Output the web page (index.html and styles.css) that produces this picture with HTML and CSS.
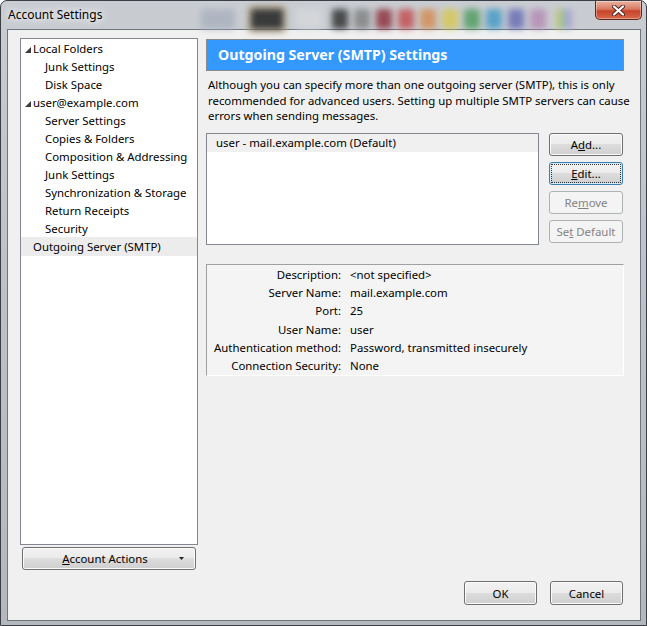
FILE: index.html
```html
<!DOCTYPE html>
<html lang="en">
<head>
  <meta charset="UTF-8">
  <meta name="viewport" content="width=device-width, initial-scale=1.0">
  <title>Account Settings</title>
  <link rel="stylesheet" href="styles.css">
</head>
<body>
  <div class="window">
    <div class="titlebar">
      <span class="title">Account Settings</span>
      <div class="glass">
        <span class="sw sw-slate"></span>
        <span class="sw sw-black"></span>
        <span class="sw sw-light"></span>
        <span class="sw sw-dark"></span>
        <span class="sw sw-grey"></span>
        <span class="sw sw-wine"></span>
        <span class="sw sw-red"></span>
        <span class="sw sw-orange"></span>
        <span class="sw sw-yellow"></span>
        <span class="sw sw-green"></span>
        <span class="sw sw-blue"></span>
        <span class="sw sw-indigo"></span>
        <span class="sw sw-mauve"></span>
        <span class="sw sw-rainbow"></span>
      </div>
      <button class="close" aria-label="Close">
        <svg width="13" height="11" viewBox="0 0 13 11">
          <path d="M2 1.5 L11 9.5 M11 1.5 L2 9.5" stroke="#4a2520" stroke-width="4" stroke-linecap="round"/>
          <path d="M2 1.5 L11 9.5 M11 1.5 L2 9.5" stroke="#fff" stroke-width="2.2" stroke-linecap="round"/>
        </svg>
      </button>
    </div>

    <div class="client">
      <div class="sidebar">
        <ul class="tree">
          <li class="node"><svg class="twisty" width="6" height="6" viewBox="0 0 6 6"><polygon points="6,0 6,6 0,6" fill="#3c3c3c"/></svg>Local Folders</li>
          <li class="leaf">Junk Settings</li>
          <li class="leaf">Disk Space</li>
          <li class="node"><svg class="twisty" width="6" height="6" viewBox="0 0 6 6"><polygon points="6,0 6,6 0,6" fill="#3c3c3c"/></svg>user@example.com</li>
          <li class="leaf">Server Settings</li>
          <li class="leaf">Copies &amp; Folders</li>
          <li class="leaf">Composition &amp; Addressing</li>
          <li class="leaf">Junk Settings</li>
          <li class="leaf">Synchronization &amp; Storage</li>
          <li class="leaf">Return Receipts</li>
          <li class="leaf">Security</li>
          <li class="node plain selected">Outgoing Server (SMTP)</li>
        </ul>
        <button class="btn actions">
          <span class="actions-label"><u>A</u>ccount Actions</span>
          <svg class="caret" width="5" height="3" viewBox="0 0 5 3"><polygon points="0,0 5,0 2.5,3" fill="#222"/></svg>
        </button>
      </div>

      <div class="panel">
        <div class="panel-header">Outgoing Server (SMTP) Settings</div>
        <p class="intro">Although you can specify more than one outgoing server (SMTP), this is only recommended for advanced users. Setting up multiple SMTP servers can cause errors when sending messages.</p>

        <div class="servers">
          <ul class="server-list">
            <li class="current">user - mail.example.com (Default)</li>
          </ul>
          <div class="server-buttons">
            <button class="btn">A<u>d</u>d...</button>
            <button class="btn focused"><span class="focus-ring"><u>E</u>dit...</span></button>
            <button class="btn" disabled>Re<u>m</u>ove</button>
            <button class="btn" disabled>Se<u>t</u> Default</button>
          </div>
        </div>

        <div class="details">
          <span class="label">Description:</span><span class="value">&lt;not specified&gt;</span>
          <span class="label">Server Name:</span><span class="value">mail.example.com</span>
          <span class="label">Port:</span><span class="value">25</span>
          <span class="label">User Name:</span><span class="value">user</span>
          <span class="label">Authentication method:</span><span class="value">Password, transmitted insecurely</span>
          <span class="label">Connection Security:</span><span class="value">None</span>
        </div>

        <div class="dialog-buttons">
          <button class="btn">OK</button>
          <button class="btn">Cancel</button>
        </div>
      </div>
    </div>
  </div>
</body>
</html>
```

FILE: styles.css
```css
html, body { margin: 0; padding: 0; }
body { font-family: "Noto Sans", "Open Sans", sans-serif; font-size: 11.4px; color: #000; background: #fff; }

.window { box-sizing: border-box; width: 647px; height: 626px; border: 1px solid #3b3f45; border-radius: 7px 7px 0 0; padding: 0 5px 4px 6px; display: flex; flex-direction: column; background: linear-gradient(180deg, #c9cdd2 0%, #bfc3c9 40%, #b4b8bd 100%); }

/* title bar */
.titlebar { height: 28px; flex: none; display: flex; align-items: flex-start; }
.title { padding: 6px 0 0 1px; line-height: 16px; font-size: 12px; text-shadow: 0 0 6px #fff, 0 0 10px #fff; width: 193px; flex: none; }
.glass { display: flex; align-items: flex-start; margin-top: 8px; height: 20px; filter: blur(3px); opacity: 0.8; }
.sw { display: block; height: 20px; width: 16px; margin-right: 6px; border-radius: 2px; }
.sw-slate { width: 34px; background: #a9b0bd; margin-right: 16px; }
.sw-black { width: 32px; background: #161616; box-shadow: 0 0 0 4px #b8a98a; margin-right: 13px; }
.sw-light { width: 26px; background: #d6d8db; margin-right: 10px; }
.sw-dark { background: #2a2a2a; }
.sw-grey { background: #7d7d7d; }
.sw-wine { background: #8c2a36; }
.sw-red { background: #c24848; }
.sw-orange { background: #d48a4e; }
.sw-yellow { background: #d6c84e; }
.sw-green { background: #4a9a5a; }
.sw-blue { background: #3f98c6; }
.sw-indigo { background: #6468b4; }
.sw-mauve { background: #b388b4; margin-right: 10px; }
.sw-rainbow { background: linear-gradient(90deg, #d7c060, #9cc474, #8aa8d8, #c090c8); }

.close { margin-left: auto; margin-right: -1px; width: 47px; height: 19px; padding: 0; border: 1px solid #5c2a22; border-top: none; border-radius: 0 0 5px 5px; background: linear-gradient(180deg, #eab3a3 0%, #d87a60 45%, #c7432a 55%, #d8664a 100%); box-shadow: inset 0 0 0 1px rgba(255,255,255,0.35); display: flex; align-items: center; justify-content: center; }

/* client area */
.client { flex: 1; border: 1px solid #6d7580; background: #f0f0f0; padding: 8px 16px 15px 12px; display: flex; align-items: stretch; }

.sidebar { width: 178px; flex: none; align-self: flex-start; }
.tree { box-sizing: border-box; height: 507px; margin: 0; padding: 1px 0 0; list-style: none; background: #fff; border: 1px solid #828790; }
.tree li { height: 18px; line-height: 18px; white-space: nowrap; display: flex; align-items: center; }
.tree .node { padding-left: 4px; }
.tree .node.plain { padding-left: 12px; }
.tree .leaf { padding-left: 24px; }
.tree .selected { background: #ececec; margin-top: -1px; height: 19px; }
.twisty { margin: 1px 2px 0 0; flex: none; }

.btn { font: inherit; color: #000; height: 23px; padding: 0; border: 1px solid #707070; border-radius: 3px; background: linear-gradient(180deg, #f2f2f2 0%, #ebebeb 50%, #dddddd 50%, #cfcfcf 100%); box-shadow: inset 0 0 0 1px #fbfbfb; cursor: pointer; }
.btn:disabled { border-color: #adb2b5; background: #f4f4f4; color: #838383; box-shadow: none; cursor: default; }
.btn.focused { border-color: #3c7fb1; box-shadow: inset 0 0 0 1px #d4ecfa; }
.focus-ring { display: block; margin: 2px; line-height: 17px; outline: 1px dotted #333; outline-offset: 0; }

.actions { width: 174px; margin: 2px 0 0 2px; display: flex; align-items: center; }
.actions-label { flex: 1; padding-left: 8px; }
.caret { margin-right: 11px; }

/* right panel */
.panel { flex: 1; margin-left: 8px; display: flex; flex-direction: column; }
.panel-header { box-sizing: border-box; height: 32px; margin-top: 1px; padding-left: 11px; border: 1px solid #8a8a8a; background: #3399ff; color: #fff; font-size: 14.2px; font-weight: bold; line-height: 30px; }
.intro { margin: 6px -8px 0 2px; line-height: 15.5px; }

.servers { display: flex; margin-top: 9px; }
.server-list { box-sizing: border-box; width: 333px; height: 112px; margin: 0; padding: 0; list-style: none; background: #fff; border: 1px solid #828790; }
.server-list li { height: 18px; line-height: 17px; padding-left: 9px; }
.server-list .current { background: #f0f0f0; }
.server-buttons { width: 74px; margin-left: 10px; display: flex; flex-direction: column; gap: 6px; }
.server-buttons .btn { width: 74px; }

.details { box-sizing: border-box; height: 112px; margin-top: 19px; padding-top: 1px; border-top: 1px solid #a0a0a0; border-left: 1px solid #a0a0a0; border-right: 1px solid #fff; border-bottom: 1px solid #fff; background: #f4f4f4; display: grid; grid-template-columns: 134px 1fr; grid-auto-rows: 18.2px; column-gap: 9px; align-items: center; align-content: start; }
.details .label { text-align: right; white-space: nowrap; }

.dialog-buttons { margin-top: auto; margin-right: 1px; display: flex; justify-content: flex-end; gap: 13px; }
.dialog-buttons .btn { width: 73px; height: 24px; }
```
